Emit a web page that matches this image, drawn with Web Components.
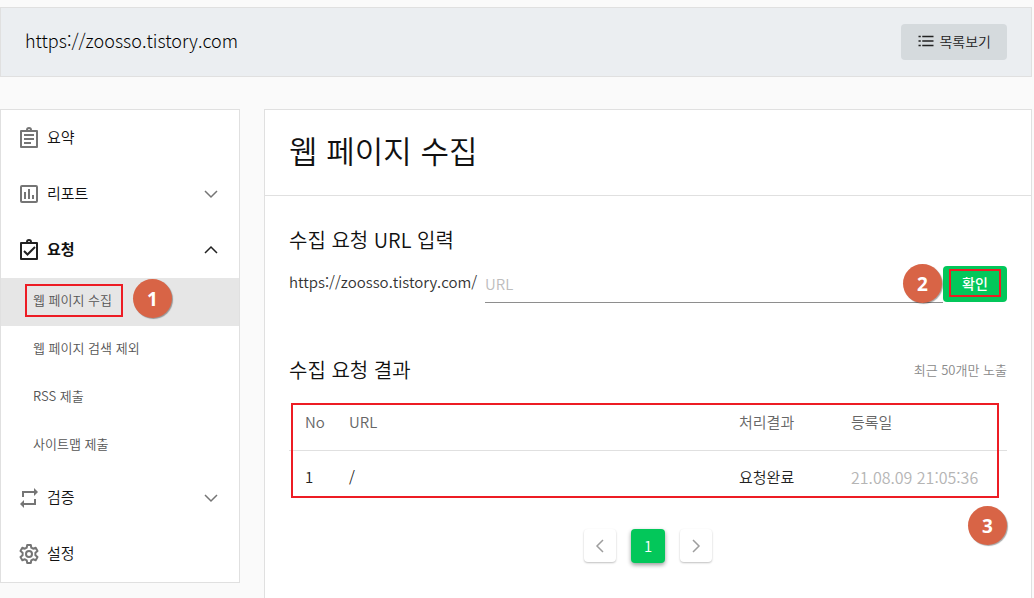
<!DOCTYPE html>
<html lang="ko">
<head>
<meta charset="utf-8">
<meta name="viewport" content="width=device-width, initial-scale=1">
<title>웹 페이지 수집</title>
<style>
  body {
    margin: 0;
    background: #fafafa;
    color: #111;
    font-family: "Noto Sans CJK KR", sans-serif;
    font-weight: 350;
    font-size: 15px;
    line-height: 24px;
  }
</style>
</head>
<body>
<console-app></console-app>

<script>
const icons = {
  list: '<path d="M2 6h3M2 12h3M2 18h3" stroke-width="2"/><path d="M7 6h15M7 12h15M7 18h15" stroke-width="2"/>',
  summary: '<path d="M4 5h16v16H4z" stroke-width="2" stroke-linejoin="round"/><path d="M10 4a2 2 0 0 1 4 0" stroke-width="2"/><path d="M7 9h10M7 13h10M7 17h7" stroke-width="2"/>',
  report: '<rect x="4" y="4" width="16" height="16" rx="1" stroke-width="2"/><path d="M8 10v7M12 7v10M16 13v4" stroke-width="2"/>',
  request: '<path d="M4 5h16v16H4z" stroke-width="2" stroke-linejoin="round"/><path d="M10 4a2 2 0 0 1 4 0" stroke-width="2"/><path d="M7 13l3.5 3.5L18 9" stroke-width="2"/>',
  verify: '<path d="M6 11V6h12M18 13v5H6" stroke-width="2"/><path d="M17 2l4 4-4 4zM7 14l-4 4 4 4z" fill="currentColor" stroke="none"/>',
  settings: '<path d="M10.2 3h3.6l.5 2.7 1.8 1 2.6-.9 1.8 3.1-2.1 1.8v2.6l2.1 1.8-1.8 3.1-2.6-.9-1.8 1-.5 2.7h-3.6l-.5-2.7-1.8-1-2.6.9-1.8-3.1 2.1-1.8v-2.6L3.5 8.9l1.8-3.1 2.6.9 1.8-1z" stroke-width="2" stroke-linejoin="round"/><circle cx="12" cy="12" r="3" stroke-width="2"/>',
  down: '<path d="M6 9l6 6 6-6" stroke-width="1.5"/>',
  up: '<path d="M6 15l6-6 6 6" stroke-width="1.5"/>',
  prev: '<path d="M15 6l-6 6 6 6" stroke-width="1.5"/>',
  next: '<path d="M9 6l6 6-6 6" stroke-width="1.5"/>'
};

class UiIcon extends HTMLElement {
  constructor() {
    super();
    this.attachShadow({ mode: 'open' });
  }

  connectedCallback() {
    this.shadowRoot.innerHTML = `
      <style>
        :host { display: inline-flex; flex: none; width: 24px; height: 24px; }
        svg { width: 100%; height: 100%; fill: none; stroke: currentColor; }
      </style>
      <svg viewBox="0 0 24 24" aria-hidden="true">${icons[this.getAttribute('name')]}</svg>
    `;
  }
}
customElements.define('ui-icon', UiIcon);

// Numbered circle that sits on top of the page
class StepBadge extends HTMLElement {
  constructor() {
    super();
    this.attachShadow({ mode: 'open' }).innerHTML = `
      <style>
        :host {
          position: absolute;
          z-index: 2;
          display: flex;
          align-items: center;
          justify-content: center;
          width: 39px;
          height: 39px;
          border-radius: 50%;
          background: #d86446;
          box-shadow: 1px 1px 1px rgba(0, 0, 0, 0.35);
          color: #fff;
          font: bold 19px/24px "Noto Sans", sans-serif;
        }
      </style>
      <slot></slot>
    `;
  }
}
customElements.define('step-badge', StepBadge);

// Red outline over a part of the page
class StepOutline extends HTMLElement {
  constructor() {
    super();
    this.attachShadow({ mode: 'open' }).innerHTML = `
      <style>
        :host {
          position: absolute;
          z-index: 1;
          box-sizing: border-box;
          border: 2px solid #ed1c24;
          pointer-events: none;
        }
      </style>
    `;
  }
}
customElements.define('step-outline', StepOutline);

class SiteHeader extends HTMLElement {
  constructor() {
    super();
    this.attachShadow({ mode: 'open' }).innerHTML = `
      <style>
        :host {
          display: flex;
          align-items: center;
          justify-content: space-between;
          padding: 16px 24px;
          border: 1px solid #e0e0e0;
          background: #ebeef1;
        }
        .site { padding-bottom: 4px; color: #000; font-size: 18px; font-weight: 300; }
        button {
          display: flex;
          align-items: center;
          gap: 4px;
          height: 36px;
          padding: 0 16px 2px;
          border: 0;
          border-radius: 4px;
          background: #d5dadd;
          color: #222;
          font: inherit;
          font-size: 14px;
        }
        ui-icon { width: 18px; height: 18px; }
      </style>
      <span class="site"><slot></slot></span>
      <button type="button"><ui-icon name="list"></ui-icon>목록보기</button>
    `;
  }
}
customElements.define('site-header', SiteHeader);

class NavItem extends HTMLElement {
  constructor() {
    super();
    this.attachShadow({ mode: 'open' });
  }

  connectedCallback() {
    const arrow = this.getAttribute('arrow');
    this.shadowRoot.innerHTML = `
      <style>
        :host { display: block; }
        a {
          display: flex;
          align-items: center;
          gap: 6px;
          height: 56px;
          padding: 0 16px;
          color: #111;
          text-decoration: none;
        }
        ui-icon { color: #757575; }
        span { flex: 1; padding-bottom: 2px; }
        :host([open]) a { font-weight: bold; }
        :host([open]) ui-icon { color: #212121; }
      </style>
      <a href="#">
        <ui-icon name="${this.getAttribute('icon')}"></ui-icon>
        <span><slot></slot></span>
        ${arrow ? `<ui-icon name="${arrow}"></ui-icon>` : ''}
      </a>
    `;
  }
}
customElements.define('nav-item', NavItem);

class NavSubitem extends HTMLElement {
  constructor() {
    super();
    this.attachShadow({ mode: 'open' }).innerHTML = `
      <style>
        :host { display: block; position: relative; }
        a {
          display: flex;
          align-items: center;
          height: 44px;
          padding: 0 32px 4px;
          color: #555;
          font-size: 13px;
          text-decoration: none;
        }
        :host([active]) { background: #e6e6e6; }
        ::slotted(step-outline) { left: 24px; top: 6px; width: 98px; height: 33px; }
        ::slotted(step-badge) { left: 132px; top: 1px; }
      </style>
      <a href="#"><slot></slot></a>
      <slot name="mark"></slot>
    `;
  }
}
customElements.define('nav-subitem', NavSubitem);

class SideNav extends HTMLElement {
  constructor() {
    super();
    this.attachShadow({ mode: 'open' }).innerHTML = `
      <style>
        :host { display: block; border: 1px solid #e0e0e0; background: #fff; }
      </style>
      <nav>
        <nav-item icon="summary">요약</nav-item>
        <nav-item icon="report" arrow="down">리포트</nav-item>
        <nav-item icon="request" arrow="up" open>요청</nav-item>
        <nav-subitem active>웹 페이지 수집
          <step-outline slot="mark"></step-outline>
          <step-badge slot="mark">1</step-badge>
        </nav-subitem>
        <nav-subitem>웹 페이지 검색 제외</nav-subitem>
        <nav-subitem>RSS 제출</nav-subitem>
        <nav-subitem>사이트맵 제출</nav-subitem>
        <nav-item icon="verify" arrow="down">검증</nav-item>
        <nav-item icon="settings">설정</nav-item>
      </nav>
    `;
  }
}
customElements.define('side-nav', SideNav);

class UrlForm extends HTMLElement {
  constructor() {
    super();
    this.attachShadow({ mode: 'open' }).innerHTML = `
      <style>
        :host { display: block; }
        form { display: flex; align-items: flex-start; }
        label { margin-right: 8px; color: #333; line-height: 32px; }
        input {
          flex: 1;
          min-width: 0;
          height: 37px;
          box-sizing: border-box;
          padding: 0 0 2px;
          border: 0;
          border-bottom: 1px solid #8e8e8e;
          background: none;
          font: inherit;
          outline: 0;
        }
        input::placeholder { color: #bdbdbd; opacity: 1; }
        .confirm { position: relative; }
        button {
          display: block;
          width: 64px;
          height: 36px;
          padding: 0 0 2px;
          border: 0;
          border-radius: 4px;
          background: #03c75a;
          color: #fff;
          font: inherit;
          font-size: 14px;
          font-weight: 500;
        }
        step-outline { inset: 3px 6px 5px 6px; }
        step-badge { right: 65px; top: -2px; }
      </style>
      <form>
        <label for="url">https://zoosso.tistory.com/</label>
        <input id="url" type="text" placeholder="URL">
        <div class="confirm">
          <button type="button">확인</button>
          <step-outline></step-outline>
          <step-badge>2</step-badge>
        </div>
      </form>
    `;
  }
}
customElements.define('url-form', UrlForm);

class ResultTable extends HTMLElement {
  constructor() {
    super();
    this.attachShadow({ mode: 'open' }).innerHTML = `
      <style>
        :host { display: block; position: relative; }
        table { width: 100%; border-collapse: collapse; table-layout: fixed; }
        th, td { padding: 0 0 0 16px; text-align: left; font-weight: inherit; }
        th { height: 56px; border-bottom: 1px solid #e0e0e0; color: #666; }
        td { height: 52px; color: #222; }
        .no { width: 28px; }
        .state { width: 96px; }
        .date { width: 156px; }
        td.date { color: #b5b5b5; font-size: 16px; }
        step-outline { inset: 9px 8px 5px 2px; }
        step-badge { right: 0; bottom: -42px; }
      </style>
      <table>
        <thead>
          <tr><th class="no">No</th><th>URL</th><th class="state">처리결과</th><th class="date">등록일</th></tr>
        </thead>
        <tbody>
          <tr><td>1</td><td>/</td><td>요청완료</td><td class="date">21.08.09 21:05:36</td></tr>
        </tbody>
      </table>
      <step-outline></step-outline>
      <step-badge>3</step-badge>
    `;
  }
}
customElements.define('result-table', ResultTable);

class PageControl extends HTMLElement {
  constructor() {
    super();
    this.attachShadow({ mode: 'open' }).innerHTML = `
      <style>
        :host { display: flex; justify-content: center; gap: 15px; }
        button {
          display: flex;
          align-items: center;
          justify-content: center;
          width: 32px;
          height: 33px;
          padding: 0;
          border: 0;
          border-radius: 4px;
          background: #fff;
          box-shadow: 0 1px 2px rgba(0, 0, 0, 0.25);
          color: #9e9e9e;
          font: inherit;
        }
        .current {
          width: 34px;
          height: 34px;
          background: #03c75a;
          box-shadow: 0 2px 4px rgba(0, 0, 0, 0.4);
          color: #fff;
        }
      </style>
      <button type="button" aria-label="이전"><ui-icon name="prev"></ui-icon></button>
      <button type="button" class="current">1</button>
      <button type="button" aria-label="다음"><ui-icon name="next"></ui-icon></button>
    `;
  }
}
customElements.define('page-control', PageControl);

class CollectPanel extends HTMLElement {
  constructor() {
    super();
    this.attachShadow({ mode: 'open' }).innerHTML = `
      <style>
        :host {
          display: block;
          border: 1px solid #e0e0e0;
          border-bottom: 0;
          background: #fff;
        }
        h1, h2 { margin: 0; font-weight: inherit; }
        h1 {
          padding: 18px 24px 23px;
          border-bottom: 1px solid #e0e0e0;
          font-size: 31px;
          line-height: 44px;
        }
        h2 { font-size: 20px; line-height: 28px; }
        .content { padding: 30px 24px 0; }
        url-form { margin: 12px 0 53px; }
        .heading { display: flex; align-items: center; justify-content: space-between; }
        .note { color: #8a8a8a; font-size: 13px; }
        result-table { margin: 10px 0 26px; }
      </style>
      <h1>웹 페이지 수집</h1>
      <div class="content">
        <h2>수집 요청 URL 입력</h2>
        <url-form></url-form>
        <div class="heading">
          <h2>수집 요청 결과</h2>
          <span class="note">최근 50개만 노출</span>
        </div>
        <result-table></result-table>
        <page-control></page-control>
      </div>
    `;
  }
}
customElements.define('collect-panel', CollectPanel);

class ConsoleApp extends HTMLElement {
  constructor() {
    super();
    this.attachShadow({ mode: 'open' }).innerHTML = `
      <style>
        :host {
          display: flex;
          flex-direction: column;
          gap: 32px;
          box-sizing: border-box;
          min-height: 100vh;
          padding: 7px 2px 0 0;
        }
        .columns {
          flex: 1;
          display: grid;
          grid-template-columns: 240px minmax(0, 1fr);
          gap: 24px;
        }
        side-nav { align-self: start; }
      </style>
      <site-header>https://zoosso.tistory.com</site-header>
      <div class="columns">
        <side-nav></side-nav>
        <collect-panel></collect-panel>
      </div>
    `;
  }
}
customElements.define('console-app', ConsoleApp);
</script>
</body>
</html>
